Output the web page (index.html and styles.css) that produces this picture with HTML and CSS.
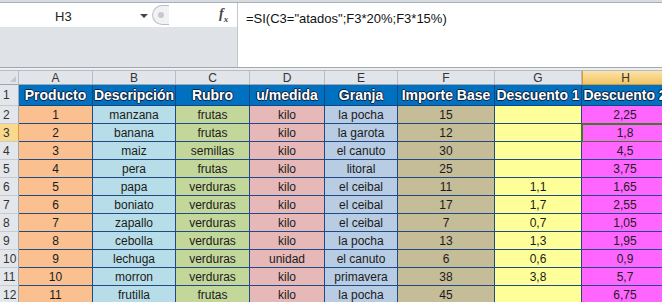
FILE: index.html
```html
<!DOCTYPE html>
<html lang="es">
<head>
<meta charset="UTF-8">
<title>Hoja de precios</title>
<link rel="stylesheet" href="styles.css">
</head>
<body>

<div class="toolbar-edge"></div>

<div class="formula-bar">
  <div class="fb-left">
    <div class="fb-top">
      <div class="namebox"><span class="cellref">H3</span><span class="caret"></span></div>
      <div class="grip"><span></span></div>
      <div class="fx"><i>f</i><sub>x</sub></div>
    </div>
  </div>
  <div class="formula">=SI(C3="atados";F3*20%;F3*15%)</div>
</div>
<div class="bar-gap"></div>

<div class="sheet">
  <div class="row colheads">
    <div class="corner"><span></span></div>
    <div>A</div><div>B</div><div>C</div><div>D</div><div>E</div><div>F</div><div>G</div><div class="sel">H</div>
  </div>

  <div class="row titles">
    <div class="rh">1</div>
    <div>Producto</div><div>Descripción</div><div>Rubro</div><div>u/medida</div><div>Granja</div><div>Importe Base</div><div>Descuento 1</div><div>Descuento 2</div>
  </div>

  <div class="row data">
    <div class="rh">2</div>
    <div>1</div><div>manzana</div><div>frutas</div><div>kilo</div><div>la pocha</div><div>15</div><div></div><div>2,25</div>
  </div>
  <div class="row data">
    <div class="rh sel">3</div>
    <div>2</div><div>banana</div><div>frutas</div><div>kilo</div><div>la garota</div><div>12</div><div></div><div class="active">1,8</div>
  </div>
  <div class="row data">
    <div class="rh">4</div>
    <div>3</div><div>maiz</div><div>semillas</div><div>kilo</div><div>el canuto</div><div>30</div><div></div><div>4,5</div>
  </div>
  <div class="row data">
    <div class="rh">5</div>
    <div>4</div><div>pera</div><div>frutas</div><div>kilo</div><div>litoral</div><div>25</div><div></div><div>3,75</div>
  </div>
  <div class="row data">
    <div class="rh">6</div>
    <div>5</div><div>papa</div><div>verduras</div><div>kilo</div><div>el ceibal</div><div>11</div><div>1,1</div><div>1,65</div>
  </div>
  <div class="row data">
    <div class="rh">7</div>
    <div>6</div><div>boniato</div><div>verduras</div><div>kilo</div><div>el ceibal</div><div>17</div><div>1,7</div><div>2,55</div>
  </div>
  <div class="row data">
    <div class="rh">8</div>
    <div>7</div><div>zapallo</div><div>verduras</div><div>kilo</div><div>el ceibal</div><div>7</div><div>0,7</div><div>1,05</div>
  </div>
  <div class="row data">
    <div class="rh">9</div>
    <div>8</div><div>cebolla</div><div>verduras</div><div>kilo</div><div>la pocha</div><div>13</div><div>1,3</div><div>1,95</div>
  </div>
  <div class="row data">
    <div class="rh">10</div>
    <div>9</div><div>lechuga</div><div>verduras</div><div>unidad</div><div>el canuto</div><div>6</div><div>0,6</div><div>0,9</div>
  </div>
  <div class="row data">
    <div class="rh">11</div>
    <div>10</div><div>morron</div><div>verduras</div><div>kilo</div><div>primavera</div><div>38</div><div>3,8</div><div>5,7</div>
  </div>
  <div class="row data">
    <div class="rh">12</div>
    <div>11</div><div>frutilla</div><div>frutas</div><div>kilo</div><div>la pocha</div><div>45</div><div></div><div>6,75</div>
  </div>
</div>

</body>
</html>
```

FILE: styles.css
```css
body {
  margin: 0;
  width: 662px;
  height: 302px;
  overflow: hidden;
  background-color: #fff;
  font-family: "Liberation Sans", Arial, sans-serif;
  color: #222;
}

/* formula bar */
.toolbar-edge {
  height: 2px;
  background-color: #d7dce2;
  border-bottom: 1px solid #a9afb7;
}

.formula-bar {
  display: flex;
  height: 64px;
  border-bottom: 1px solid #a3a8af;
}

.fb-left {
  width: 237px;
  background-color: #dfe2e7;
}

.fb-top {
  display: flex;
  align-items: center;
  height: 24px;
  background-color: #fff;
}

.namebox {
  position: relative;
  width: 150px;
  height: 24px;
}

.cellref {
  position: absolute;
  left: 55px;
  top: 6px;
  font-size: 13px;
}

.caret {
  position: absolute;
  left: 140px;
  top: 11px;
  border-left: 4px solid transparent;
  border-right: 4px solid transparent;
  border-top: 4px solid #444;
}

.grip {
  display: flex;
  align-items: center;
  width: 16px;
  height: 18px;
  margin-left: 2px;
  border: 1px solid #b9bec6;
  border-right: none;
  border-radius: 10px 0 0 10px;
  background-color: #f1f2f4;
}

.grip span {
  width: 6px;
  height: 6px;
  margin-left: 5px;
  border-radius: 50%;
  background-color: #c5c9cf;
}

.fx {
  margin-left: 50px;
  font-family: "Liberation Serif", serif;
  font-size: 14px;
  font-weight: bold;
  color: #444;
}

.fx sub {
  font-size: 9px;
  font-style: italic;
}

.formula {
  flex: 1;
  padding: 8px 0 0 8px;
  border-left: 1px solid #c3c7cd;
  font-size: 13px;
  color: #111;
}

.bar-gap {
  height: 2px;
  background-color: #eceef1;
  border-bottom: 1px solid #b6bbc2;
}

/* grid */
.row {
  display: grid;
  grid-template-columns: 19px 74px 83px 74px 75px 73px 97px 87px 87px;
  width: 669px;
}

.row > div {
  box-sizing: border-box;
  display: flex;
  align-items: center;
  justify-content: center;
  white-space: nowrap;
  overflow: hidden;
  border-right: 1px solid #1f4a86;
  border-bottom: 1px solid #1f4a86;
}

.colheads {
  height: 14px;
  font-size: 12px;
  color: #333;
}

.colheads > div {
  background-color: #e1e4e9;
  border-right: 1px solid #b8bdc5;
  border-bottom: 1px solid #9ea5ae;
}

.colheads .sel {
  background: linear-gradient(#fae4a8, #f3c463);
  border-left: 1px solid #d39b3a;
  border-bottom: 1px solid #d39b3a;
}

.corner {
  position: relative;
}

.corner span {
  position: absolute;
  right: 2px;
  bottom: 2px;
  border-left: 6px solid transparent;
  border-bottom: 6px solid #c3c8cf;
}

.titles {
  height: 21px;
}

.titles > div {
  background-color: #0070c0;
  color: #fff;
  font-size: 14px;
  font-weight: bold;
  border-right: 1px solid #16457d;
  border-bottom: 1px solid #16457d;
  text-shadow: -1px 0 #0c2340, 1px 0 #0c2340, 0 1px #0c2340, 0 -1px #0c2340;
}

.row > .rh {
  justify-content: flex-start;
  padding-left: 3px;
  font-size: 12px;
  font-weight: normal;
  color: #333;
  text-shadow: none;
  background-color: #e3e6eb;
  border-right: 1px solid #9ea5ae;
  border-bottom: 1px solid #c6cbd2;
}

.row > .rh.sel {
  background-color: #f9d98c;
  border-right: 1px solid #d39b3a;
}

.data {
  height: 18px;
  font-size: 12px;
  color: #1b1b1b;
}

.data > div:nth-child(2) { background-color: #fac090; }
.data > div:nth-child(3) { background-color: #b7dee8; }
.data > div:nth-child(4) { background-color: #c4d79b; }
.data > div:nth-child(5) { background-color: #e6b8b7; }
.data > div:nth-child(6) { background-color: #b8cce4; }
.data > div:nth-child(7) { background-color: #c4bd97; }
.data > div:nth-child(8) { background-color: #ffff99; }
.data > div:nth-child(9) { background-color: #ff66ff; }

.data > .active {
  outline: 2px solid #3f7b25;
  outline-offset: -1px;
}
```
